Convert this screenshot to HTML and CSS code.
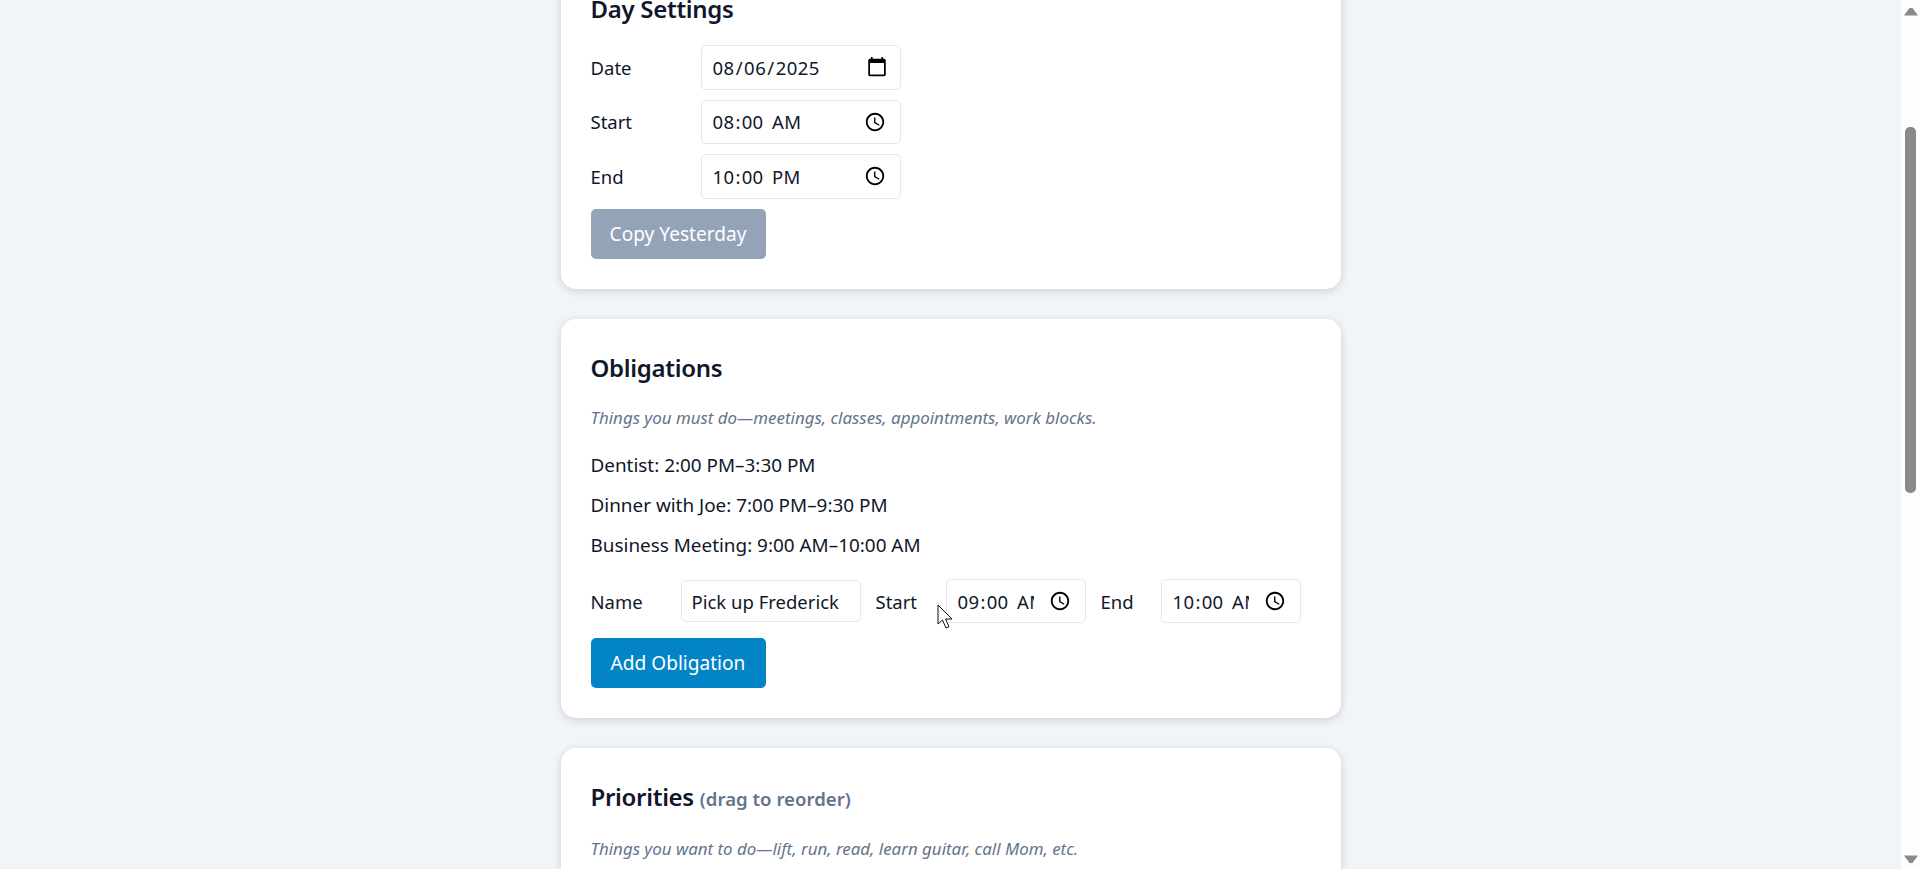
FILE: index.html
```html
<!DOCTYPE html>
<html lang="en">
<head>
<meta charset="utf-8">
<title>Day Planner</title>
<link rel="stylesheet" href="styles.css">
</head>
<body>
<div class="page">
  <main class="content">
    <div class="column">
      <section class="card">
        <h2 class="card-title">Day Settings</h2>
        <div class="field-row"><label class="field-label">Date</label><input class="field field-date" type="date" value="2025-08-06"></div>
        <div class="field-row"><label class="field-label">Start</label><input class="field" type="time" value="08:00"></div>
        <div class="field-row"><label class="field-label">End</label><input class="field" type="time" value="22:00"></div>
        <button class="btn btn-muted">Copy Yesterday</button>
      </section>
      <section class="card">
        <h2 class="card-title">Obligations</h2>
        <p class="hint">Things you must do—meetings, classes, appointments, work blocks.</p>
        <ul class="items">
          <li>Dentist: 2:00 PM–3:30 PM</li>
          <li>Dinner with Joe: 7:00 PM–9:30 PM</li>
          <li>Business Meeting: 9:00 AM–10:00 AM</li>
        </ul>
        <div class="add-row">
          <label class="inline-label label-name">Name</label>
          <input class="field field-name" type="text" value="Pick up Frederick">
          <label class="inline-label label-start">Start</label>
          <input class="field field-time" type="time" value="09:00">
          <label class="inline-label label-end">End</label>
          <input class="field field-time" type="time" value="10:00">
        </div>
        <button class="btn btn-primary">Add Obligation</button>
      </section>
      <section class="card">
        <h2 class="card-title">Priorities <span class="title-note">(drag to reorder)</span></h2>
        <p class="hint">Things you want to do—lift, run, read, learn guitar, call Mom, etc.</p>
      </section>
    </div>
    <svg class="cursor" width="16" height="25" viewBox="0 0 16 25"><path d="M1 1v19l4.500-4 3.500 8 3-1.300-3.500-7.700H15z" fill="#fff" stroke="#111" stroke-width="1"/></svg>
  </main>
  <aside class="scrollbar">
    <svg class="arrow arrow-up" width="14" height="9" viewBox="0 0 14 9"><path d="M5.500 1h3L14 8.500H0z" fill="#8a8a8a"/></svg>
    <div class="thumb"></div>
    <svg class="arrow arrow-down" width="14" height="9" viewBox="0 0 14 9"><path d="M0 .5h14L8.500 8h-3z" fill="#8a8a8a"/></svg>
  </aside>
</div>
</body>
</html>
```
FILE: styles.css
```css
* { box-sizing: border-box; }
html, body { margin: 0; height: 100%; overflow: hidden; }
body {
  background: #f1f5f9;
  color: #0f172a;
  font-family: "Noto Sans", "Open Sans", "Liberation Sans", sans-serif;
  font-size: 18.500px;
}
.page { display: flex; height: 869px; overflow: hidden; }
.content { flex: 1; position: relative; overflow: hidden; height: 869px; }
.column { width: 780px; margin: -40px auto 0; }
.card {
  background: #fff;
  border-radius: 15px;
  padding: 30px;
  margin-bottom: 30px;
  box-shadow: 0 2px 8px rgba(15, 23, 42, .16);
}
.card-title { margin: 0 0 16px; font-size: 24px; font-weight: 600; line-height: 38px; letter-spacing: -.3px; }
.card-title + .field-row { margin-top: 17px; }
.title-note { font-size: 18.600px; font-weight: 600; color: #64748b; letter-spacing: 0; }
.field-row { display: flex; align-items: center; margin-bottom: 10px; height: 44.500px; }
.field-label { width: 110px; }
.field {
  font: inherit;
  color: #0f172a;
  background: #fff;
  border: 1px solid #e2e8f0;
  border-radius: 5px;
  padding: 0 10px;
  height: 44.500px;
  width: 200px;
}
.field::-webkit-datetime-edit { letter-spacing: .35px; }
.field-date::-webkit-datetime-edit { letter-spacing: .5px; }
.field::-webkit-datetime-edit-ampm-field { margin-left: 3px; }
.field::-webkit-calendar-picker-indicator { width: 22px; height: 22px; padding: 0; margin: 0 4px 0 15px; }
.field-date::-webkit-calendar-picker-indicator { margin-right: 2px; }
.btn {
  display: block;
  width: 175px;
  height: 50px;
  padding: 0;
  border: 0;
  border-radius: 5px;
  color: #fff;
  font: inherit;
  font-size: 19.100px;
  font-weight: 400;
}
.btn-muted { background: #94a3b8; }
.btn-primary { background: #0284c7; }
.hint { margin: 0 0 12.500px; font-size: 16.900px; font-style: italic; color: #64748b; line-height: 30px; }
.items { list-style: none; margin: 0 0 14px; padding: 0; font-size: 18.900px; }
.items li { line-height: 40px; }
.add-row { display: flex; align-items: center; gap: 15px; margin-bottom: 15px; }
.inline-label { flex: none; }
.label-name { width: 75px; }
.label-start { width: 55px; }
.label-end { width: 45px; }
.field-name { width: 180px; height: 42px; }
.field-time { width: 140px; height: 44px; }
.cursor { position: absolute; left: 937px; top: 604px; }
.scrollbar {
  flex: none;
  width: 19px;
  background: #fdfdfd;
  display: flex;
  flex-direction: column;
  align-items: center;
  padding-top: 7px;
}
.arrow { flex: none; display: block; }
.thumb { flex: none; width: 11px; height: 366px; margin-top: 111px; border-radius: 5px; background: #8a8a8a; }
.arrow-down { margin-top: 362px; }
```
